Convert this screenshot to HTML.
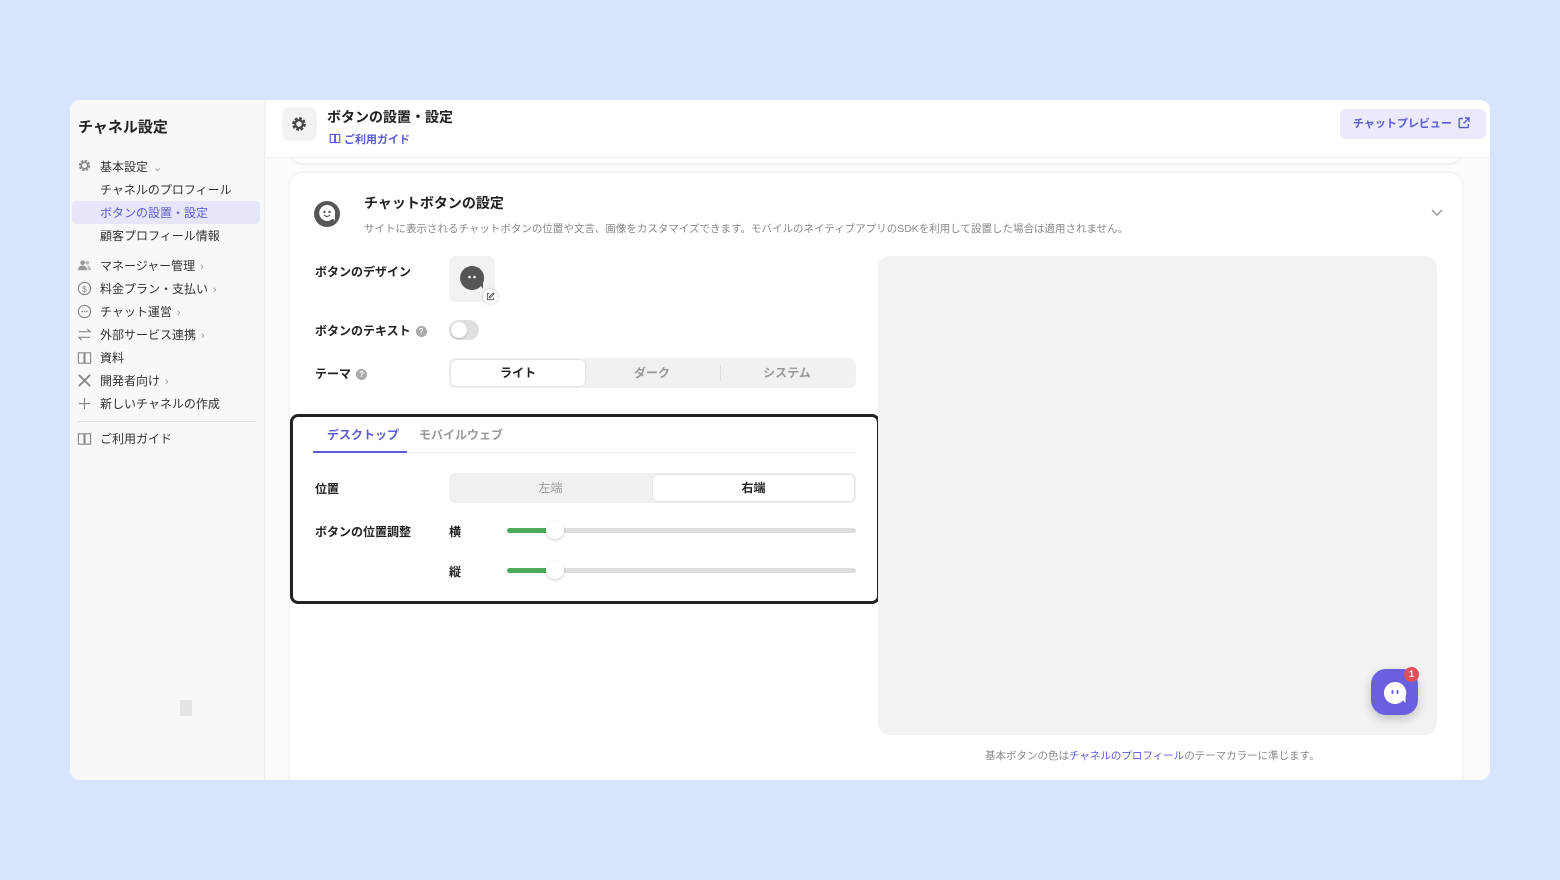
<!DOCTYPE html>
<html><head><meta charset="utf-8"><style>
*{box-sizing:border-box;margin:0;padding:0}
body{width:1560px;height:880px;background:#d7e5fc;font-family:"Liberation Sans","Noto Sans CJK JP",sans-serif;position:relative;overflow:hidden;color:#222}
.a{position:absolute}
.win{left:70px;top:100px;width:1420px;height:680px;border-radius:10px;overflow:hidden;background:#fbfbfb}
.side{left:0;top:0;width:195px;height:680px;background:#f8f8f8;border-right:1px solid #eee}
.nav{position:absolute;left:30px;font-size:12px;color:#333;white-space:nowrap}
.ic{position:absolute;left:7px;width:15px;height:15px}
.chev{color:#999;font-size:11px;margin-left:5px}
.lbl{position:absolute;font-size:12px;font-weight:bold;color:#222;white-space:nowrap}
.q{display:inline-block;width:11px;height:11px;border-radius:50%;background:#aaa;color:#fff;font-size:8px;text-align:center;line-height:11px;margin-left:5px;vertical-align:1px}
</style></head><body>
<div class="a win">
 <div class="a side">
  <div class="a" style="left:8px;top:16px;font-size:15px;font-weight:bold">チャネル設定</div>
  <svg class="ic" style="top:58px" viewBox="0 0 16 16"><circle cx="8" cy="8" r="4.6" fill="none" stroke="#888" stroke-width="3" stroke-dasharray="2.3 1.3"/><circle cx="8" cy="8" r="3.4" fill="none" stroke="#888" stroke-width="1.6"/><circle cx="8" cy="8" r="1.6" fill="#f8f8f8"/></svg>
  <div class="nav" style="top:58px">基本設定<span class="chev">⌄</span></div>
  <div class="nav" style="top:81px">チャネルのプロフィール</div>
  <div class="a" style="left:2px;top:101px;width:188px;height:23px;background:#e6e6fa;border-radius:4px"></div>
  <div class="nav" style="top:104px;color:#5b5bd6">ボタンの設置・設定</div>
  <div class="nav" style="top:127px">顧客プロフィール情報</div>
  <svg class="ic" style="top:158px" viewBox="0 0 16 16"><circle cx="6" cy="5" r="2.5" fill="#999"/><path d="M1 13c0-3 2-5 5-5s5 2 5 5z" fill="#999"/><circle cx="11" cy="5" r="2" fill="#bbb"/><path d="M11 8c2 0 4 2 4 5h-3" fill="#bbb"/></svg>
  <div class="nav" style="top:157px">マネージャー管理<span class="chev">›</span></div>
  <svg class="ic" style="top:181px" viewBox="0 0 16 16"><circle cx="8" cy="8" r="6.5" fill="none" stroke="#888" stroke-width="1.2"/><text x="8" y="11.5" font-size="9" text-anchor="middle" fill="#888">$</text></svg>
  <div class="nav" style="top:180px">料金プラン・支払い<span class="chev">›</span></div>
  <svg class="ic" style="top:204px" viewBox="0 0 16 16"><circle cx="8" cy="8" r="6.5" fill="none" stroke="#888" stroke-width="1.2"/><circle cx="5.5" cy="8" r=".9" fill="#888"/><circle cx="8" cy="8" r=".9" fill="#888"/><circle cx="10.5" cy="8" r=".9" fill="#888"/></svg>
  <div class="nav" style="top:203px">チャット運営<span class="chev">›</span></div>
  <svg class="ic" style="top:227px" viewBox="0 0 16 16"><path d="M2 5h12l-3-3M14 11H2l3 3" fill="none" stroke="#888" stroke-width="1.3"/></svg>
  <div class="nav" style="top:226px">外部サービス連携<span class="chev">›</span></div>
  <svg class="ic" style="top:250px" viewBox="0 0 16 16"><path d="M1.5 3h6v11h-6zM8.5 3h6v11h-6z" fill="none" stroke="#888" stroke-width="1.2"/></svg>
  <div class="nav" style="top:249px">資料</div>
  <svg class="ic" style="top:273px" viewBox="0 0 16 16"><path d="M2 2l12 12M14 2L2 14" stroke="#888" stroke-width="2"/></svg>
  <div class="nav" style="top:272px">開発者向け<span class="chev">›</span></div>
  <svg class="ic" style="top:296px" viewBox="0 0 16 16"><path d="M8 2v12M2 8h12" stroke="#888" stroke-width="1.2"/></svg>
  <div class="nav" style="top:295px">新しいチャネルの作成</div>
  <div class="a" style="left:8px;top:321px;width:178px;height:1px;background:#e2e2e2"></div>
  <svg class="ic" style="top:331px" viewBox="0 0 16 16"><path d="M1.5 3h6v11h-6zM8.5 3h6v11h-6z" fill="none" stroke="#888" stroke-width="1.2"/></svg>
  <div class="nav" style="top:330px">ご利用ガイド</div>
  <div class="a" style="left:110px;top:600px;width:12px;height:16px;background:#e4e4e4"></div>
 </div>
 <!-- previous card edge -->
 <div class="a" style="left:220px;top:30px;width:1172px;height:33px;background:#fff;border-radius:0 0 12px 12px;box-shadow:0 1px 3px rgba(0,0,0,.08)"></div>
 <!-- header -->
 <div class="a" style="left:196px;top:0;width:1224px;height:58px;background:#fff;border-bottom:1px solid #eee"></div>
 <div class="a" style="left:212px;top:7px;width:35px;height:34px;border-radius:8px;background:#f3f3f3"></div>
 <svg class="a" style="left:220px;top:15px" width="18" height="18" viewBox="0 0 16 16"><circle cx="8" cy="8" r="4.6" fill="none" stroke="#444" stroke-width="3" stroke-dasharray="2.3 1.3"/><circle cx="8" cy="8" r="3.4" fill="none" stroke="#444" stroke-width="1.8"/></svg>
 <div class="a" style="left:257px;top:7px;font-size:14px;font-weight:bold">ボタンの設置・設定</div>
 <svg class="a" style="left:259px;top:33px" width="12" height="11" viewBox="0 0 16 15"><path d="M1.5 2h6v11h-6zM8.5 2h6v11h-6z" fill="none" stroke="#5b5bd6" stroke-width="1.6"/></svg>
 <div class="a" style="left:274px;top:31px;font-size:11px;font-weight:bold;color:#5b5bd6">ご利用ガイド</div>
 <div class="a" style="left:1270px;top:9px;width:146px;height:30px;border-radius:6px;background:#eaeafc;color:#5b5bd6;font-size:11px;font-weight:bold;line-height:30px;padding-left:13px">チャットプレビュー <svg width="12" height="12" viewBox="0 0 12 12" style="vertical-align:-2px;margin-left:3px"><path d="M5 1.5H2a.8.8 0 0 0-.8.8v7.5a.8.8 0 0 0 .8.8h7.5a.8.8 0 0 0 .8-.8V7M7 1h4v4M11 1L5.5 6.5" fill="none" stroke="#5b5bd6" stroke-width="1.4"/></svg></div>
 <!-- card -->
 <div class="a" style="left:220px;top:73px;width:1172px;height:640px;background:#fff;border-radius:12px;box-shadow:0 0 3px rgba(0,0,0,.1)"></div>
</div>
<svg class="a" style="left:313px;top:200px" width="28" height="28" viewBox="0 0 28 28"><circle cx="14" cy="14" r="13" fill="#555"/><path d="M14 5a8 8 0 1 0 6 13.5l2 2.5v-6.5A8 8 0 0 0 14 5z" fill="#fff"/><circle cx="11.5" cy="12" r="1.2" fill="#555"/><circle cx="16.5" cy="12" r="1.2" fill="#555"/><path d="M11 15q3 3 6 0" stroke="#555" stroke-width="1.2" fill="none"/></svg>
<div class="a" style="left:364px;top:193px;font-size:14px;font-weight:bold">チャットボタンの設定</div>
<div class="a" style="left:364px;top:221px;font-size:10.5px;color:#888;white-space:nowrap">サイトに表示されるチャットボタンの位置や文言、画像をカスタマイズできます。モバイルのネイティブアプリのSDKを利用して設置した場合は適用されません。</div>
<svg class="a" style="left:1430px;top:207px" width="14" height="10" viewBox="0 0 14 10"><path d="M2 3l5 5 5-5" stroke="#999" stroke-width="1.4" fill="none"/></svg>

<div class="lbl" style="left:315px;top:263px">ボタンのデザイン</div>
<div class="a" style="left:449px;top:256px;width:46px;height:46px;border-radius:6px;background:#f2f2f2"></div>
<svg class="a" style="left:459px;top:265px" width="26" height="26" viewBox="0 0 26 26"><path d="M13 1a12 12 0 1 0 9 20l2 3v-6a12 12 0 0 0-11-17z" fill="#555"/><circle cx="10.5" cy="12" r="1.3" fill="#fff"/><circle cx="15.5" cy="12" r="1.3" fill="#fff"/></svg>
<div class="a" style="left:483px;top:289px;width:15px;height:15px;border-radius:50%;background:#fff;box-shadow:0 0 2px rgba(0,0,0,.3)"></div>
<svg class="a" style="left:486px;top:292px" width="9" height="9" viewBox="0 0 10 10"><path d="M4 1.5H1.5v7h7V6M8 1l1 1-4.5 4.5H3.5v-1z" fill="none" stroke="#555" stroke-width="1"/></svg>
<div class="lbl" style="left:315px;top:322px">ボタンのテキスト<span class="q">?</span></div>
<div class="a" style="left:449px;top:320px;width:30px;height:20px;border-radius:10px;background:#e0e0e0"></div>
<div class="a" style="left:451px;top:322px;width:16px;height:16px;border-radius:50%;background:#fff;box-shadow:0 1px 2px rgba(0,0,0,.2)"></div>
<div class="lbl" style="left:315px;top:365px">テーマ<span class="q">?</span></div>
<div class="a" style="left:449px;top:358px;width:407px;height:30px;border-radius:6px;background:#f1f1f1"></div>
<div class="a" style="left:451px;top:360px;width:134px;height:26px;border-radius:5px;background:#fff;box-shadow:0 0 2px rgba(0,0,0,.15);text-align:center;line-height:26px;font-size:12px;font-weight:bold">ライト</div>
<div class="a" style="left:585px;top:360px;width:134px;line-height:26px;text-align:center;font-size:12px;color:#999;font-weight:bold">ダーク</div>
<div class="a" style="left:720px;top:365px;width:1px;height:16px;background:#ddd"></div>
<div class="a" style="left:720px;top:360px;width:134px;line-height:26px;text-align:center;font-size:12px;color:#999;font-weight:bold">システム</div>

<div class="a" style="left:290px;top:414px;width:590px;height:190px;border:3px solid #222;border-radius:8px"></div>
<div class="a" style="left:327px;top:426px;font-size:12px;font-weight:bold;color:#5b5bd6">デスクトップ</div>
<div class="a" style="left:419px;top:426px;font-size:12px;font-weight:bold;color:#999">モバイルウェブ</div>
<div class="a" style="left:313px;top:452px;width:543px;height:1px;background:#eee"></div>
<div class="a" style="left:313px;top:451px;width:94px;height:2px;background:#5b5bd6"></div>
<div class="lbl" style="left:315px;top:480px">位置</div>
<div class="a" style="left:449px;top:473px;width:407px;height:30px;border-radius:6px;background:#f1f1f1"></div>
<div class="a" style="left:449px;top:473px;width:203px;line-height:30px;text-align:center;font-size:12px;color:#999">左端</div>
<div class="a" style="left:653px;top:475px;width:201px;height:26px;border-radius:5px;background:#fff;box-shadow:0 0 2px rgba(0,0,0,.15);text-align:center;line-height:26px;font-size:12px;font-weight:bold">右端</div>
<div class="lbl" style="left:315px;top:523px">ボタンの位置調整</div>
<div class="lbl" style="left:449px;top:523px">横</div>
<div class="lbl" style="left:449px;top:563px">縦</div>
<div class="a" style="left:507px;top:528px;width:349px;height:5px;border-radius:3px;background:#ddd"></div>
<div class="a" style="left:507px;top:528px;width:48px;height:5px;border-radius:3px;background:#4caa5a"></div>
<div class="a" style="left:546px;top:521px;width:18px;height:18px;border-radius:50%;background:#fff;box-shadow:0 1px 3px rgba(0,0,0,.2)"></div>
<div class="a" style="left:507px;top:568px;width:349px;height:5px;border-radius:3px;background:#ddd"></div>
<div class="a" style="left:507px;top:568px;width:48px;height:5px;border-radius:3px;background:#4caa5a"></div>
<div class="a" style="left:546px;top:561px;width:18px;height:18px;border-radius:50%;background:#fff;box-shadow:0 1px 3px rgba(0,0,0,.2)"></div>

<div class="a" style="left:878px;top:256px;width:559px;height:479px;border-radius:12px;background:#f2f2f2"></div>
<div class="a" style="left:1371px;top:669px;width:47px;height:46px;border-radius:15px;background:#6a5fe0;box-shadow:0 4px 10px rgba(0,0,0,.2)"></div>
<svg class="a" style="left:1382px;top:680px" width="26" height="26" viewBox="0 0 26 26"><path d="M13 2a11 11 0 1 0 8 18.5l2.5 2.5v-6A11 11 0 0 0 13 2z" fill="#fff"/><rect x="9.5" y="10" width="2" height="4" rx="1" fill="#6a5fe0"/><rect x="14.5" y="10" width="2" height="4" rx="1" fill="#6a5fe0"/></svg>
<div class="a" style="left:1404px;top:667px;width:15px;height:15px;border-radius:50%;background:#e0505a;color:#fff;font-size:9px;font-weight:bold;text-align:center;line-height:15px">1</div>
<div class="a" style="left:985px;top:748px;font-size:10.5px;color:#888;white-space:nowrap">基本ボタンの色は<span style="color:#5b5bd6">チャネルのプロフィール</span>のテーマカラーに準じます。</div>
</body></html>
